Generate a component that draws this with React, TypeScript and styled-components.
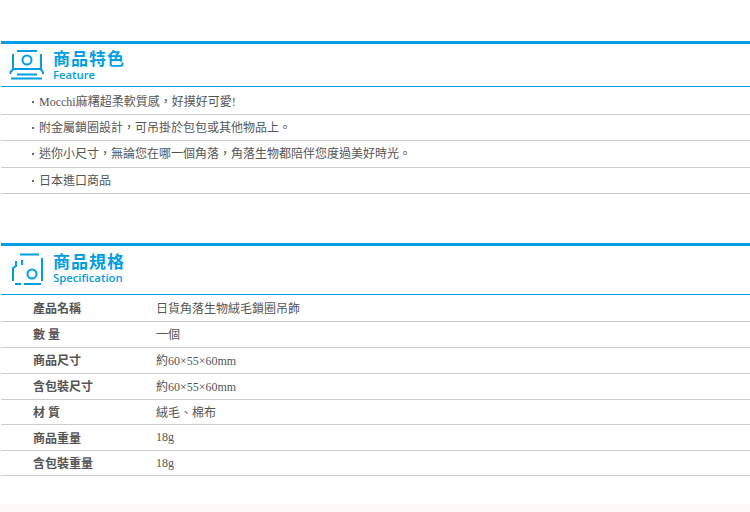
import styled, { createGlobalStyle } from "styled-components";

const features = [
    "Mocchi麻糬超柔軟質感，好摸好可愛!",
    "附金屬鎖圈設計，可吊掛於包包或其他物品上。",
    "迷你小尺寸，無論您在哪一個角落，角落生物都陪伴您度過美好時光。",
    "日本進口商品",
];

const specs = [
    ["產品名稱", "日貨角落生物絨毛鎖圈吊飾"],
    ["數 量", "一個"],
    ["商品尺寸", "約60×55×60mm"],
    ["含包裝尺寸", "約60×55×60mm"],
    ["材 質", "絨毛、棉布"],
    ["商品重量", "18g"],
    ["含包裝重量", "18g"],
];

const App = () => {
    return (
        <Page>
            <GlobalStyle />
            <Content>
                <Section>
                    <Header $height={42}>
                        <HeaderIcon width="36" height="34" viewBox="0 0 36 34">
                            <path d="M8 3h20M4 6v15M32 6v15M4 21h28M4.500 21L1.500 24v2M31.500 21L34 24v2M8 26.500h20M2 30.500h31" />
                            <circle cx="18" cy="12" r="4.500" />
                        </HeaderIcon>
                        <HeaderText>
                            <Title>商品特色</Title>
                            <Subtitle>Feature</Subtitle>
                        </HeaderText>
                    </Header>
                    <FeatureList>
                        {features.map((text) => (
                            <FeatureRow key={text}>{text}</FeatureRow>
                        ))}
                    </FeatureList>
                </Section>
                <SpecSection>
                    <Header $height={48}>
                        <HeaderIcon width="36" height="34" viewBox="0 0 36 34">
                            <path d="M11 1.500h19M33 5v23M7 8v5l-3 2v13M13 7v5M6 31h6M15 31h17" />
                            <circle cx="23" cy="21" r="4.500" />
                        </HeaderIcon>
                        <SpecHeaderText>
                            <Title>商品規格</Title>
                            <Subtitle>Specification</Subtitle>
                        </SpecHeaderText>
                    </Header>
                    <SpecList>
                        {specs.map(([label, value]) => (
                            <SpecRow key={label}>
                                <SpecLabel>{label}</SpecLabel>
                                <SpecValue>{value}</SpecValue>
                            </SpecRow>
                        ))}
                    </SpecList>
                </SpecSection>
            </Content>
            <Footer />
        </Page>
    );
};

const GlobalStyle = createGlobalStyle`
    html, body {
        margin: 0;
        background: #fff;
        overflow: hidden;
    }
`;

const Page = styled.div`
    width: 750px;
    height: 512px;
    display: flex;
    flex-direction: column;
    font-family: "Liberation Serif", "Noto Sans CJK TC", serif;
    font-size: 12px;
    color: #555;
`;

const Content = styled.div`
    flex: 1;
    padding: 41px 0 0 1px;
`;

const Section = styled.section`
    border-top: 3px solid #009fe3;
`;

const SpecSection = styled(Section)`
    margin-top: 49px;
`;

const Header = styled.div<{ $height: number }>`
    height: ${(props) => props.$height}px;
    display: flex;
    align-items: center;
    gap: 8px;
    padding-left: 8px;
    border-bottom: 1px solid #009fe3;
`;

const HeaderIcon = styled.svg`
    flex: none;
    fill: none;
    stroke: #009fe3;
    stroke-width: 2;
`;

const HeaderText = styled.div`
    display: flex;
    flex-direction: column;
    color: #009fe3;
    font-family: "Noto Sans CJK TC", sans-serif;
    font-weight: 700;
`;

const SpecHeaderText = styled(HeaderText)`
    margin-bottom: 4px;
`;

const Title = styled.div`
    font-size: 17px;
    line-height: 19px;
    letter-spacing: 1px;
`;

const Subtitle = styled.div`
    font-family: "Open Sans", sans-serif;
    font-size: 11.300px;
    font-weight: 600;
    line-height: 15px;
`;

const FeatureList = styled.div`
    padding-top: 2px;
`;

const FeatureRow = styled.div`
    position: relative;
    height: 25px;
    line-height: 27px;
    padding-left: 38px;
    border-bottom: 1px solid #ccc;

    &:nth-child(3) {
        height: 26px;
    }

    &::before {
        content: "";
        position: absolute;
        left: 31px;
        top: 12px;
        width: 2px;
        height: 2px;
        background: #666;
    }
`;

const SpecList = styled.div`
    padding-top: 1px;
`;

const SpecRow = styled.div`
    height: 26px;
    box-sizing: border-box;
    display: flex;
    align-items: center;
    border-bottom: 1px solid #ccc;

    &:nth-child(-n + 4) {
        padding-bottom: 2px;
    }

    &:nth-child(5),
    &:nth-child(7) {
        height: 25px;
    }
`;

const SpecLabel = styled.div`
    width: 155px;
    padding-left: 32px;
    box-sizing: border-box;
    font-weight: 700;
`;

const SpecValue = styled.div`
    flex: 1;
`;

const Footer = styled.div`
    height: 8px;
    background: #fff8f6;
`;

export default App;
